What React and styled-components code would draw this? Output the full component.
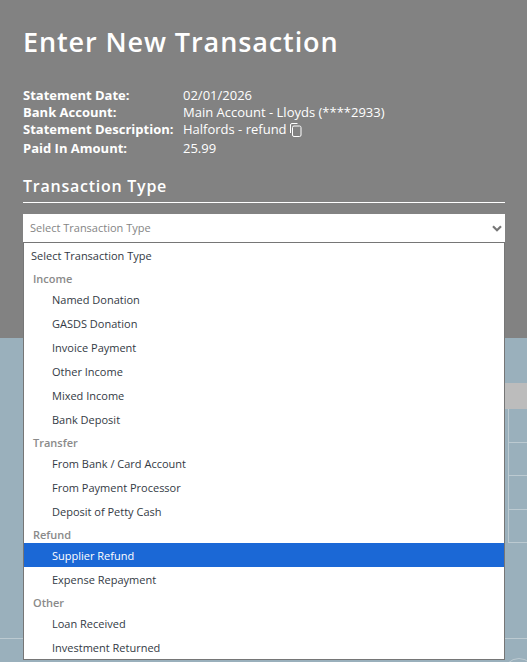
import React from "react";
import styled, { createGlobalStyle } from "styled-components";

const GlobalStyle = createGlobalStyle`
  html, body {
    margin: 0;
    padding: 0;
    height: 100%;
    overflow: hidden;
    background: #9ab0bc;
    font-family: "Open Sans", "Liberation Sans", sans-serif;
  }
`;

const details = [
  { label: "Statement Date:", value: "02/01/2026" },
  { label: "Bank Account:", value: "Main Account - Lloyds (****2933)" },
  { label: "Statement Description:", value: "Halfords - refund", copy: true },
  { label: "Paid In Amount:", value: "25.99", spaced: true },
];

const groups = [
  { label: "Income", options: ["Named Donation", "GASDS Donation", "Invoice Payment", "Other Income", "Mixed Income", "Bank Deposit"] },
  { label: "Transfer", options: ["From Bank / Card Account", "From Payment Processor", "Deposit of Petty Cash"] },
  { label: "Refund", options: ["Supplier Refund", "Expense Repayment"] },
  { label: "Other", options: ["Loan Received", "Investment Returned"] },
];

function CopyIcon() {
  return (
    <svg width="12" height="14" viewBox="0 0 12 14" fill="none" stroke="#fff" strokeWidth="1">
      <path d="M0.5 10V2A1.5 1.5 0 0 1 2 0.5H7.5" />
      <rect x="2.5" y="3" width="8.5" height="10.5" rx="1.5" />
    </svg>
  );
}

function Chevron() {
  return (
    <svg width="10" height="7" viewBox="0 0 10 7" fill="none" stroke="#777" strokeWidth="2.2">
      <path d="M1 1.2L5 5.2L9 1.2" />
    </svg>
  );
}

export default function App() {
  return (
    <Page>
      <GlobalStyle />
      <Modal>
        <Title>Enter New Transaction</Title>
        <Details>
          {details.map((d) => (
            <DetailRow key={d.label} $spaced={d.spaced}>
              <DetailLabel>{d.label}</DetailLabel>
              <DetailValue>
                {d.value}
                {d.copy && <CopyIcon />}
              </DetailValue>
            </DetailRow>
          ))}
        </Details>
        <SectionTitle>Transaction Type</SectionTitle>
        <SelectWrap>
          <SelectBox>
            <span>Select Transaction Type</span>
            <Chevron />
          </SelectBox>
          <Menu>
            <Option>Select Transaction Type</Option>
            {groups.map((g) => (
              <div key={g.label}>
                <GroupLabel>{g.label}</GroupLabel>
                {g.options.map((o) => (
                  <Option key={o} $nested $selected={o === "Supplier Refund"}>
                    {o}
                  </Option>
                ))}
              </div>
            ))}
          </Menu>
        </SelectWrap>
      </Modal>
      <Backdrop>
        <TableHead />
        <TableRow />
        <TableRow />
        <TableRow />
        <TableRow />
        <TableGap />
        <Corner />
      </Backdrop>
    </Page>
  );
}

const Page = styled.div`
  width: 527px;
  height: 662px;
  display: flex;
  flex-direction: column;
  overflow: hidden;
`;

const Modal = styled.div`
  position: relative;
  z-index: 2;
  height: 338px;
  flex: none;
  box-sizing: border-box;
  padding: 23px 22px 0 23px;
  background: #828282;
  color: #fff;
`;

const Title = styled.h1`
  margin: 0;
  font-size: 27px;
  line-height: 38px;
  font-weight: 600;
  letter-spacing: 0.9px;
`;

const Details = styled.div`
  margin-top: 26px;
  display: flex;
  flex-direction: column;
`;

const DetailRow = styled.div`
  display: flex;
  height: 17px;
  font-size: 13px;
  line-height: 17px;
  margin-top: ${(p) => (p.$spaced ? "2px" : "0")};
`;

const DetailLabel = styled.div`
  width: 160px;
  font-weight: 700;
`;

const DetailValue = styled.div`
  display: flex;
  align-items: center;
  gap: 3px;
  svg {
    margin-top: 1px;
  }
`;

const SectionTitle = styled.h2`
  margin: 18px 0 0;
  padding-bottom: 5px;
  border-bottom: 1px solid #fff;
  font-size: 16px;
  line-height: 22px;
  font-weight: 600;
  letter-spacing: 0.75px;
`;

const SelectWrap = styled.div`
  position: relative;
  margin-top: 11px;
`;

const SelectBox = styled.div`
  height: 28px;
  box-sizing: border-box;
  padding: 0 3px 2px 7px;
  display: flex;
  align-items: center;
  justify-content: space-between;
  background: #fff;
  color: #858585;
  font-size: 11px;

  svg {
    margin-top: 2px;
  }
`;

const Menu = styled.div`
  position: absolute;
  top: 28px;
  left: 0;
  right: 0;
  height: 418px;
  box-sizing: border-box;
  overflow: hidden;
  background: #fff;
  border: 1px solid #767676;
  font-size: 11px;
`;

const Option = styled.div`
  height: 24px;
  box-sizing: border-box;
  padding-top: 1px;
  line-height: 24px;
  padding-left: ${(p) => (p.$nested ? "28px" : "7px")};
  color: ${(p) => (p.$selected ? "#fff" : "#333a44")};
  background: ${(p) => (p.$selected ? "#1b68d6" : "transparent")};
`;

const GroupLabel = styled.div`
  height: 20px;
  box-sizing: border-box;
  padding-top: 2px;
  line-height: 20px;
  padding-left: 9px;
  color: #8a8a8a;
  font-weight: 600;
`;

const Backdrop = styled.div`
  flex: 1;
  position: relative;
  padding-top: 45px;
  padding-left: 508px;
`;

const TableHead = styled.div`
  height: 26px;
  margin-left: -3px;
  background: #bcbcbc;
`;

const TableRow = styled.div`
  height: 33.5px;
  box-sizing: border-box;
  border-left: 1px solid #bccad1;
  border-bottom: 1px solid #bccad1;
`;

const TableGap = styled.div`
  height: 96px;
  margin-left: -508px;
  box-sizing: border-box;
  border-bottom: 1px solid #bccad1;
`;

const Corner = styled.div`
  position: absolute;
  right: -8px;
  bottom: -28px;
  width: 30px;
  height: 30px;
  border: 1px solid #bccad1;
  border-radius: 50%;
`;
